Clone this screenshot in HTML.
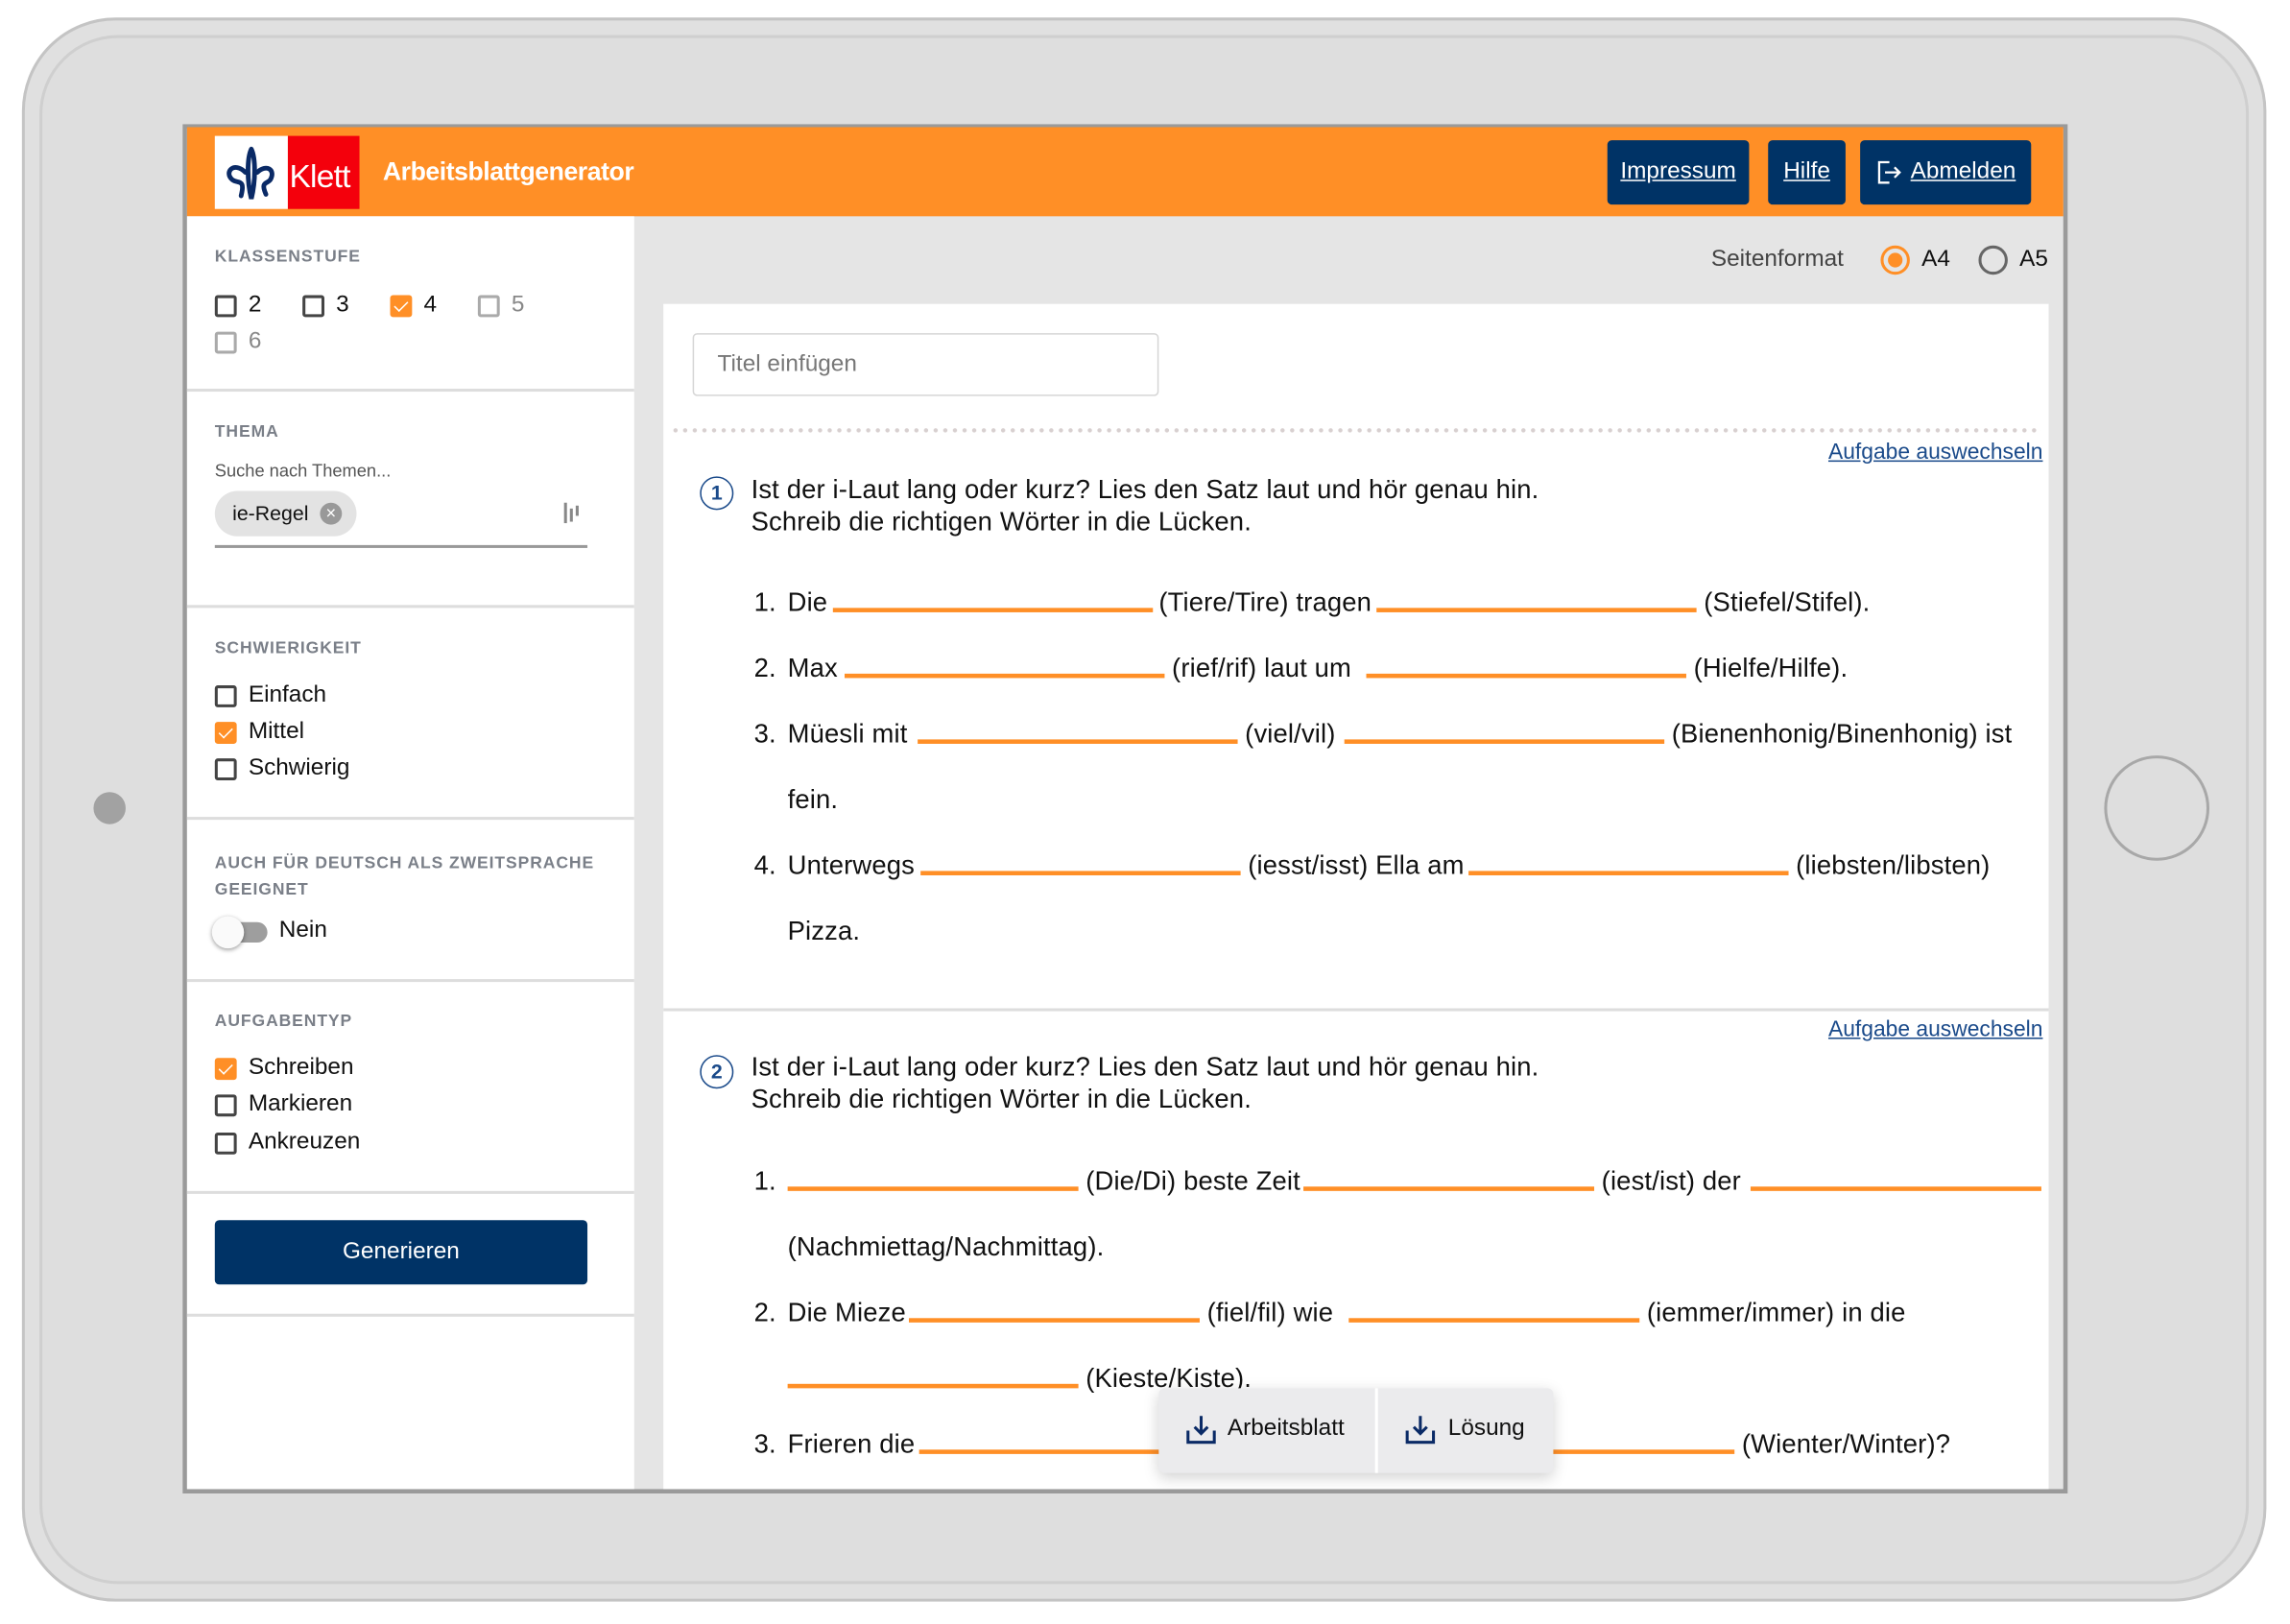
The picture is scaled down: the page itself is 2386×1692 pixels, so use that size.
<!DOCTYPE html>
<html><head><meta charset="utf-8"><style>
*{margin:0;padding:0;box-sizing:border-box}
html,body{width:2386px;height:1692px;overflow:hidden;background:#fff;font-family:"Liberation Sans",sans-serif}
#w{position:absolute;left:0;top:0;width:1564px;height:1109px;transform:scale(1.5225);transform-origin:0 0}
.a{position:absolute;white-space:nowrap}
.t{position:absolute;white-space:nowrap;font-size:18px;line-height:20px;color:#111;letter-spacing:0.1px}
.b{position:absolute;height:2.5px;background:#ff8f26}
.cb{position:absolute;width:15px;height:15px;border:2px solid #444;border-radius:2px;background:#fff}
.cb.on{background:#ff8f26;border-color:#ff8f26}
.cb.on::after{content:"";position:absolute;left:3px;top:0px;width:4px;height:8px;border:solid #fff;border-width:0 1.5px 1.5px 0;transform:rotate(45deg)}
.lbl{position:absolute;font-size:16px;line-height:18px;color:#111;white-space:nowrap}
.h{position:absolute;font-size:11.5px;font-weight:bold;color:#7a7f88;letter-spacing:.6px;white-space:nowrap}
.sep{position:absolute;left:128px;width:306px;height:1.5px;background:#ddd}
.btn{position:absolute;top:96px;height:44px;background:#003366;border-radius:3px;color:#fff;font-size:16px;line-height:44px;text-align:center;text-decoration:underline}
.lnk{position:absolute;font-size:15px;color:#1a4a8a;text-decoration:underline;white-space:nowrap;right:166px}
.num{position:absolute;width:23px;height:23px;border:1.6px solid #1a4a8a;border-radius:50%;color:#1a4a8a;font-size:14px;line-height:20px;text-align:center;font-weight:bold}
</style></head><body><div id="w">
<div class="a" style="left:15px;top:12px;width:1536px;height:1084px;border:2px solid #c4c4c4;border-radius:64px;background:#e0e0e0"></div>
<div class="a" style="left:27px;top:24px;width:1512px;height:1060px;border:2px solid #cfcfcf;border-radius:54px;background:#dedede"></div>
<div class="a" style="left:64px;top:542px;width:22px;height:22px;border-radius:50%;background:#a2a2a2"></div>
<div class="a" style="left:1440px;top:517px;width:72px;height:72px;border-radius:50%;border:2px solid #a8a8a8;background:#dedede"></div>
<div class="a" style="left:125px;top:85px;width:1290px;height:937px;border:3px solid #9a9a9a;background:#e5e5e5;overflow:hidden"></div>
<div class="a" style="left:128px;top:87px;width:1284px;height:61px;background:#ff8f26"></div>
<div class="a" style="left:147px;top:93px;width:50px;height:50px;background:#fff"></div>
<svg class="a" style="left:150px;top:96px" width="44" height="44" viewBox="0 0 44 44"><g fill="none" stroke="#0a2a66" stroke-width="3.2" stroke-linecap="round"><path d="M22 6 C19 12 19 28 22 40 C25 28 25 12 22 6"/><path d="M18 22 C10 14 3 22 9 27 C13 30 18 26 15 38"/><path d="M26 22 C32 16 39 20 35 27 C33 30 28 28 32 37"/></g></svg>
<div class="a" style="left:197px;top:93px;width:49px;height:50px;background:#f4000c"></div>
<div class="a" style="left:198px;top:108px;font-size:22px;color:#fff;letter-spacing:-0.5px">Klett</div>
<div class="a" style="left:262px;top:107px;font-size:17.5px;font-weight:bold;color:#fff;letter-spacing:-0.3px">Arbeitsblattgenerator</div>
<div class="btn" style="left:1100px;width:97px">Impressum</div>
<div class="btn" style="left:1210px;width:53px">Hilfe</div>
<div class="btn" style="left:1273px;width:117px;padding-left:24px">Abmelden</div>
<svg class="a" style="left:1283px;top:108px" width="20" height="20" viewBox="0 0 20 20" fill="none" stroke="#fff" stroke-width="1.5"><path d="M10 3H3v14h7"/><path d="M7 10h10M13.5 6.5 17 10l-3.5 3.5"/></svg>
<div class="a" style="left:128px;top:148px;width:306px;height:871px;background:#fff"></div>
<div class="h" style="left:147px;top:170px">KLASSENSTUFE</div>
<div class="cb" style="left:147px;top:202px"></div><div class="lbl" style="left:170px;top:200px">2</div>
<div class="cb" style="left:207px;top:202px"></div><div class="lbl" style="left:230px;top:200px">3</div>
<div class="cb on" style="left:267px;top:202px"></div><div class="lbl" style="left:290px;top:200px">4</div>
<div class="cb" style="left:327px;top:202px;border-color:#aaa"></div><div class="lbl" style="left:350px;top:200px;color:#888">5</div>
<div class="cb" style="left:147px;top:227px;border-color:#aaa"></div><div class="lbl" style="left:170px;top:225px;color:#888">6</div>
<div class="sep" style="top:266px"></div>
<div class="h" style="left:147px;top:290px">THEMA</div>
<div class="a" style="left:147px;top:315px;font-size:12px;color:#555">Suche nach Themen...</div>
<div class="a" style="left:147px;top:336px;width:97px;height:31px;border-radius:16px;background:#e3e3e3"></div>
<div class="a" style="left:159px;top:343px;font-size:14px;color:#111">ie-Regel</div>
<div class="a" style="left:219px;top:344px;width:15px;height:15px;border-radius:50%;background:#999;color:#fff;font-size:12px;line-height:15px;text-align:center">×</div>
<div class="a" style="left:386px;top:344px;width:2px;height:14px;background:#888"></div>
<div class="a" style="left:390px;top:348px;width:2px;height:9px;background:#888"></div>
<div class="a" style="left:394px;top:346px;width:2px;height:7px;background:#888"></div>
<div class="a" style="left:147px;top:373px;width:255px;height:1.5px;background:#999"></div>
<div class="sep" style="top:414px"></div>
<div class="h" style="left:147px;top:438px">SCHWIERIGKEIT</div>
<div class="cb" style="left:147px;top:469px"></div><div class="lbl" style="left:170px;top:467px">Einfach</div>
<div class="cb on" style="left:147px;top:494px"></div><div class="lbl" style="left:170px;top:492px">Mittel</div>
<div class="cb" style="left:147px;top:519px"></div><div class="lbl" style="left:170px;top:517px">Schwierig</div>
<div class="sep" style="top:559px"></div>
<div class="h" style="left:147px;top:582px;line-height:18px">AUCH FÜR DEUTSCH ALS ZWEITSPRACHE<br>GEEIGNET</div>
<div class="a" style="left:150px;top:631px;width:33px;height:14px;border-radius:7px;background:#9e9e9e"></div>
<div class="a" style="left:145px;top:627px;width:22px;height:22px;border-radius:50%;background:#fafafa;box-shadow:0 1px 3px rgba(0,0,0,.4)"></div>
<div class="lbl" style="left:191px;top:628px">Nein</div>
<div class="sep" style="top:670px"></div>
<div class="h" style="left:147px;top:693px">AUFGABENTYP</div>
<div class="cb on" style="left:147px;top:724px"></div><div class="lbl" style="left:170px;top:722px">Schreiben</div>
<div class="cb" style="left:147px;top:749px"></div><div class="lbl" style="left:170px;top:747px">Markieren</div>
<div class="cb" style="left:147px;top:775px"></div><div class="lbl" style="left:170px;top:773px">Ankreuzen</div>
<div class="sep" style="top:815px"></div>
<div class="a" style="left:147px;top:835px;width:255px;height:44px;border-radius:3px;background:#003366;color:#fff;font-size:16px;line-height:44px;text-align:center">Generieren</div>
<div class="sep" style="top:899px"></div>
<div class="a" style="left:1171px;top:169px;font-size:16px;color:#444">Seitenformat</div>
<div class="a" style="left:1287px;top:168px;width:20px;height:20px;border-radius:50%;border:2px solid #ff8f26"></div>
<div class="a" style="left:1292px;top:173px;width:10px;height:10px;border-radius:50%;background:#ff8f26"></div>
<div class="a" style="left:1315px;top:169px;font-size:16px;color:#111">A4</div>
<div class="a" style="left:1354px;top:168px;width:20px;height:20px;border-radius:50%;border:2px solid #666"></div>
<div class="a" style="left:1382px;top:169px;font-size:16px;color:#111">A5</div>
<div class="a" style="left:454px;top:208px;width:948px;height:811px;background:#fff;overflow:hidden"></div>
<div class="a" style="left:474px;top:228px;width:319px;height:43px;border:1.5px solid #d6d6d6;border-radius:3px"></div>
<div class="a" style="left:491px;top:241px;font-size:16px;color:#777">Titel einfügen</div>
<div class="a" style="left:459px;top:293px;width:938px;height:3px;background-image:radial-gradient(circle,#d8d0d0 1.3px,transparent 1.6px);background-size:6.6px 3px"></div>
<div class="lnk" style="top:301px">Aufgabe auswechseln</div>
<div class="num" style="left:479px;top:326px">1</div>
<div class="t" style="left:514px;top:325px">Ist der i-Laut lang oder kurz? Lies den Satz laut und hör genau hin.</div>
<div class="t" style="left:514px;top:347px">Schreib die richtigen Wörter in die Lücken.</div>

<div class="t" style="left:516px;top:402px">1.</div><div class="t" style="left:539px;top:402px">Die</div>
<div class="b" style="left:570px;top:416px;width:219px"></div>
<div class="t" style="left:793px;top:402px">(Tiere/Tire) tragen</div>
<div class="b" style="left:942px;top:416px;width:219px"></div>
<div class="t" style="left:1166px;top:402px">(Stiefel/Stifel).</div>

<div class="t" style="left:516px;top:447px">2.</div><div class="t" style="left:539px;top:447px">Max</div>
<div class="b" style="left:578px;top:461px;width:219px"></div>
<div class="t" style="left:802px;top:447px">(rief/rif) laut um</div>
<div class="b" style="left:935px;top:461px;width:219px"></div>
<div class="t" style="left:1159px;top:447px">(Hielfe/Hilfe).</div>

<div class="t" style="left:516px;top:492px">3.</div><div class="t" style="left:539px;top:492px">Müesli mit</div>
<div class="b" style="left:628px;top:506px;width:219px"></div>
<div class="t" style="left:852px;top:492px">(viel/vil)</div>
<div class="b" style="left:920px;top:506px;width:219px"></div>
<div class="t" style="left:1144px;top:492px">(Bienenhonig/Binenhonig) ist</div>
<div class="t" style="left:539px;top:537px">fein.</div>

<div class="t" style="left:516px;top:582px">4.</div><div class="t" style="left:539px;top:582px">Unterwegs</div>
<div class="b" style="left:630px;top:596px;width:219px"></div>
<div class="t" style="left:854px;top:582px">(iesst/isst) Ella am</div>
<div class="b" style="left:1005px;top:596px;width:219px"></div>
<div class="t" style="left:1229px;top:582px">(liebsten/libsten)</div>
<div class="t" style="left:539px;top:627px">Pizza.</div>

<div class="a" style="left:454px;top:690px;width:948px;height:1.5px;background:#ddd"></div>
<div class="lnk" style="top:696px">Aufgabe auswechseln</div>
<div class="num" style="left:479px;top:722px">2</div>
<div class="t" style="left:514px;top:720px">Ist der i-Laut lang oder kurz? Lies den Satz laut und hör genau hin.</div>
<div class="t" style="left:514px;top:742px">Schreib die richtigen Wörter in die Lücken.</div>

<div class="t" style="left:516px;top:798px">1.</div>
<div class="b" style="left:539px;top:812px;width:199px"></div>
<div class="t" style="left:743px;top:798px">(Die/Di) beste Zeit</div>
<div class="b" style="left:892px;top:812px;width:199px"></div>
<div class="t" style="left:1096px;top:798px">(iest/ist) der</div>
<div class="b" style="left:1198px;top:812px;width:199px"></div>
<div class="t" style="left:539px;top:843px">(Nachmiettag/Nachmittag).</div>

<div class="t" style="left:516px;top:888px">2.</div><div class="t" style="left:539px;top:888px">Die Mieze</div>
<div class="b" style="left:622px;top:902px;width:199px"></div>
<div class="t" style="left:826px;top:888px">(fiel/fil) wie</div>
<div class="b" style="left:923px;top:902px;width:199px"></div>
<div class="t" style="left:1127px;top:888px">(iemmer/immer) in die</div>
<div class="b" style="left:539px;top:947px;width:199px"></div>
<div class="t" style="left:743px;top:933px">(Kieste/Kiste).</div>

<div class="t" style="left:516px;top:978px">3.</div><div class="t" style="left:539px;top:978px">Frieren die</div>
<div class="b" style="left:629px;top:992px;width:199px"></div>
<div class="b" style="left:988px;top:992px;width:199px"></div>
<div class="t" style="left:1192px;top:978px">(Wienter/Winter)?</div>

<div class="a" style="left:793px;top:950px;width:270px;height:58px;border-radius:4px;background:#ebebed;box-shadow:0 3px 10px rgba(0,0,0,.18)"></div>
<div class="a" style="left:941px;top:950px;width:2px;height:58px;background:#fff"></div>
<svg class="a" style="left:811px;top:967px" width="22" height="22" viewBox="0 0 22 22" fill="none" stroke="#0a2a66" stroke-width="2"><path d="M2 12v8h18v-8"/><path d="M11 2v12M6.5 9.5 11 14l4.5-4.5"/></svg>
<div class="a" style="left:840px;top:969px;font-size:16px;color:#111">Arbeitsblatt</div>
<svg class="a" style="left:961px;top:967px" width="22" height="22" viewBox="0 0 22 22" fill="none" stroke="#0a2a66" stroke-width="2"><path d="M2 12v8h18v-8"/><path d="M11 2v12M6.5 9.5 11 14l4.5-4.5"/></svg>
<div class="a" style="left:991px;top:969px;font-size:16px;color:#111">Lösung</div>
</div></body></html>
